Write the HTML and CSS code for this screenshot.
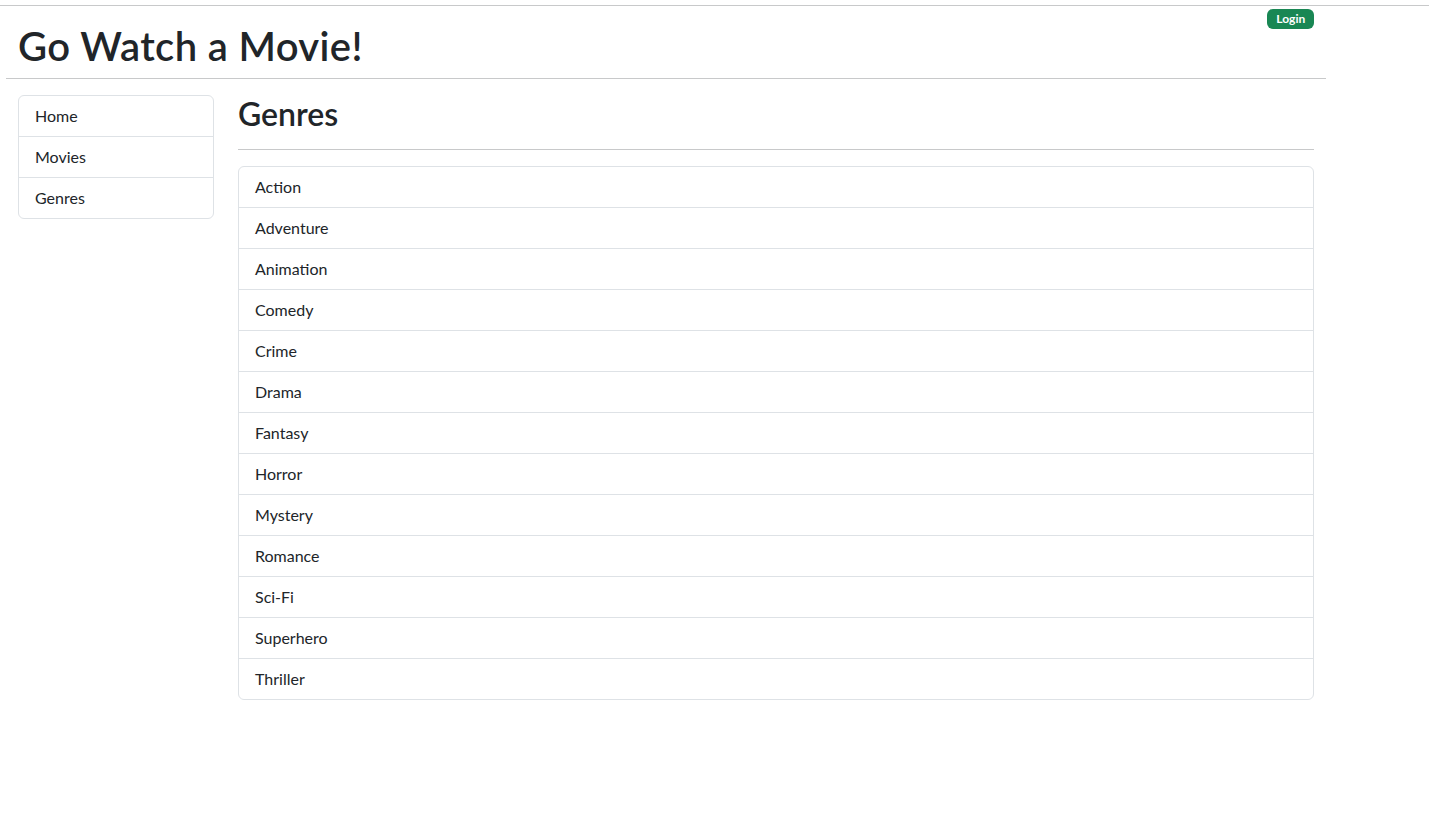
FILE: index.html
```html
<!DOCTYPE html>
<html lang="en">
<head>
<meta charset="utf-8">
<title>Go Watch a Movie!</title>
<link rel="stylesheet" href="styles.css">
</head>
<body>
<div class="topline"></div>
<div class="container">
  <header class="header">
    <h1 class="title">Go Watch a Movie!</h1>
    <a class="badge" href="#">Login</a>
  </header>
  <hr class="divider">
  <div class="main">
    <nav class="sidebar">
      <div class="list-group">
        <a class="list-item" href="#">Home</a>
        <a class="list-item" href="#">Movies</a>
        <a class="list-item" href="#">Genres</a>
      </div>
    </nav>
    <section class="content">
      <h2 class="page-title">Genres</h2>
      <hr class="page-rule">
      <div class="list-group">
        <a class="list-item" href="#">Action</a>
        <a class="list-item" href="#">Adventure</a>
        <a class="list-item" href="#">Animation</a>
        <a class="list-item" href="#">Comedy</a>
        <a class="list-item" href="#">Crime</a>
        <a class="list-item" href="#">Drama</a>
        <a class="list-item" href="#">Fantasy</a>
        <a class="list-item" href="#">Horror</a>
        <a class="list-item" href="#">Mystery</a>
        <a class="list-item" href="#">Romance</a>
        <a class="list-item" href="#">Sci-Fi</a>
        <a class="list-item" href="#">Superhero</a>
        <a class="list-item" href="#">Thriller</a>
      </div>
    </section>
  </div>
</div>
</body>
</html>
```
FILE: styles.css
```css
* { box-sizing: border-box; }
html, body { margin: 0; padding: 0; background: #fff; }
body {
  font-family: Lato, "Liberation Sans", sans-serif;
  font-size: 16px;
  line-height: 1.5;
  color: #212529;
}
.topline {
  margin-top: 5px;
  height: 1px;
  background: #c8c9ca;
}
.container {
  width: 1320px;
  margin-left: 6px;
}
.header {
  display: flex;
  justify-content: space-between;
  align-items: flex-start;
  padding: 3px 12px 0;
}
.title {
  margin: 13px 0 0;
  font-size: 40px;
  line-height: 1.2;
  font-weight: 600;
  letter-spacing: 0.35px;
}
.badge {
  display: inline-block;
  padding: 4.2px 8.8px;
  font-size: 12px;
  line-height: 1;
  font-weight: 700;
  color: #fff;
  background: #198754;
  border-radius: 6px;
  text-decoration: none;
}
.divider {
  margin: 8px 0 0;
  border: 0;
  border-top: 1px solid #c8c9ca;
}
.main {
  display: grid;
  grid-template-columns: 220px 1100px;
  margin-top: 16px;
}
.sidebar, .content { padding: 0 12px; }
.list-group {
  display: flex;
  flex-direction: column;
  border: 1px solid #dee2e6;
  border-radius: 6px;
}
.list-item {
  display: block;
  padding: 8px 16px;
  color: #212529;
  text-decoration: none;
  border-top: 1px solid #dee2e6;
  line-height: 24px;
}
.list-item:first-child { border-top: 0; }
.page-title {
  margin: 0;
  font-size: 32px;
  line-height: 1.2;
  font-weight: 600;
}
.page-rule {
  margin: 16px 0;
  border: 0;
  border-top: 1px solid #c8c9ca;
}
```
